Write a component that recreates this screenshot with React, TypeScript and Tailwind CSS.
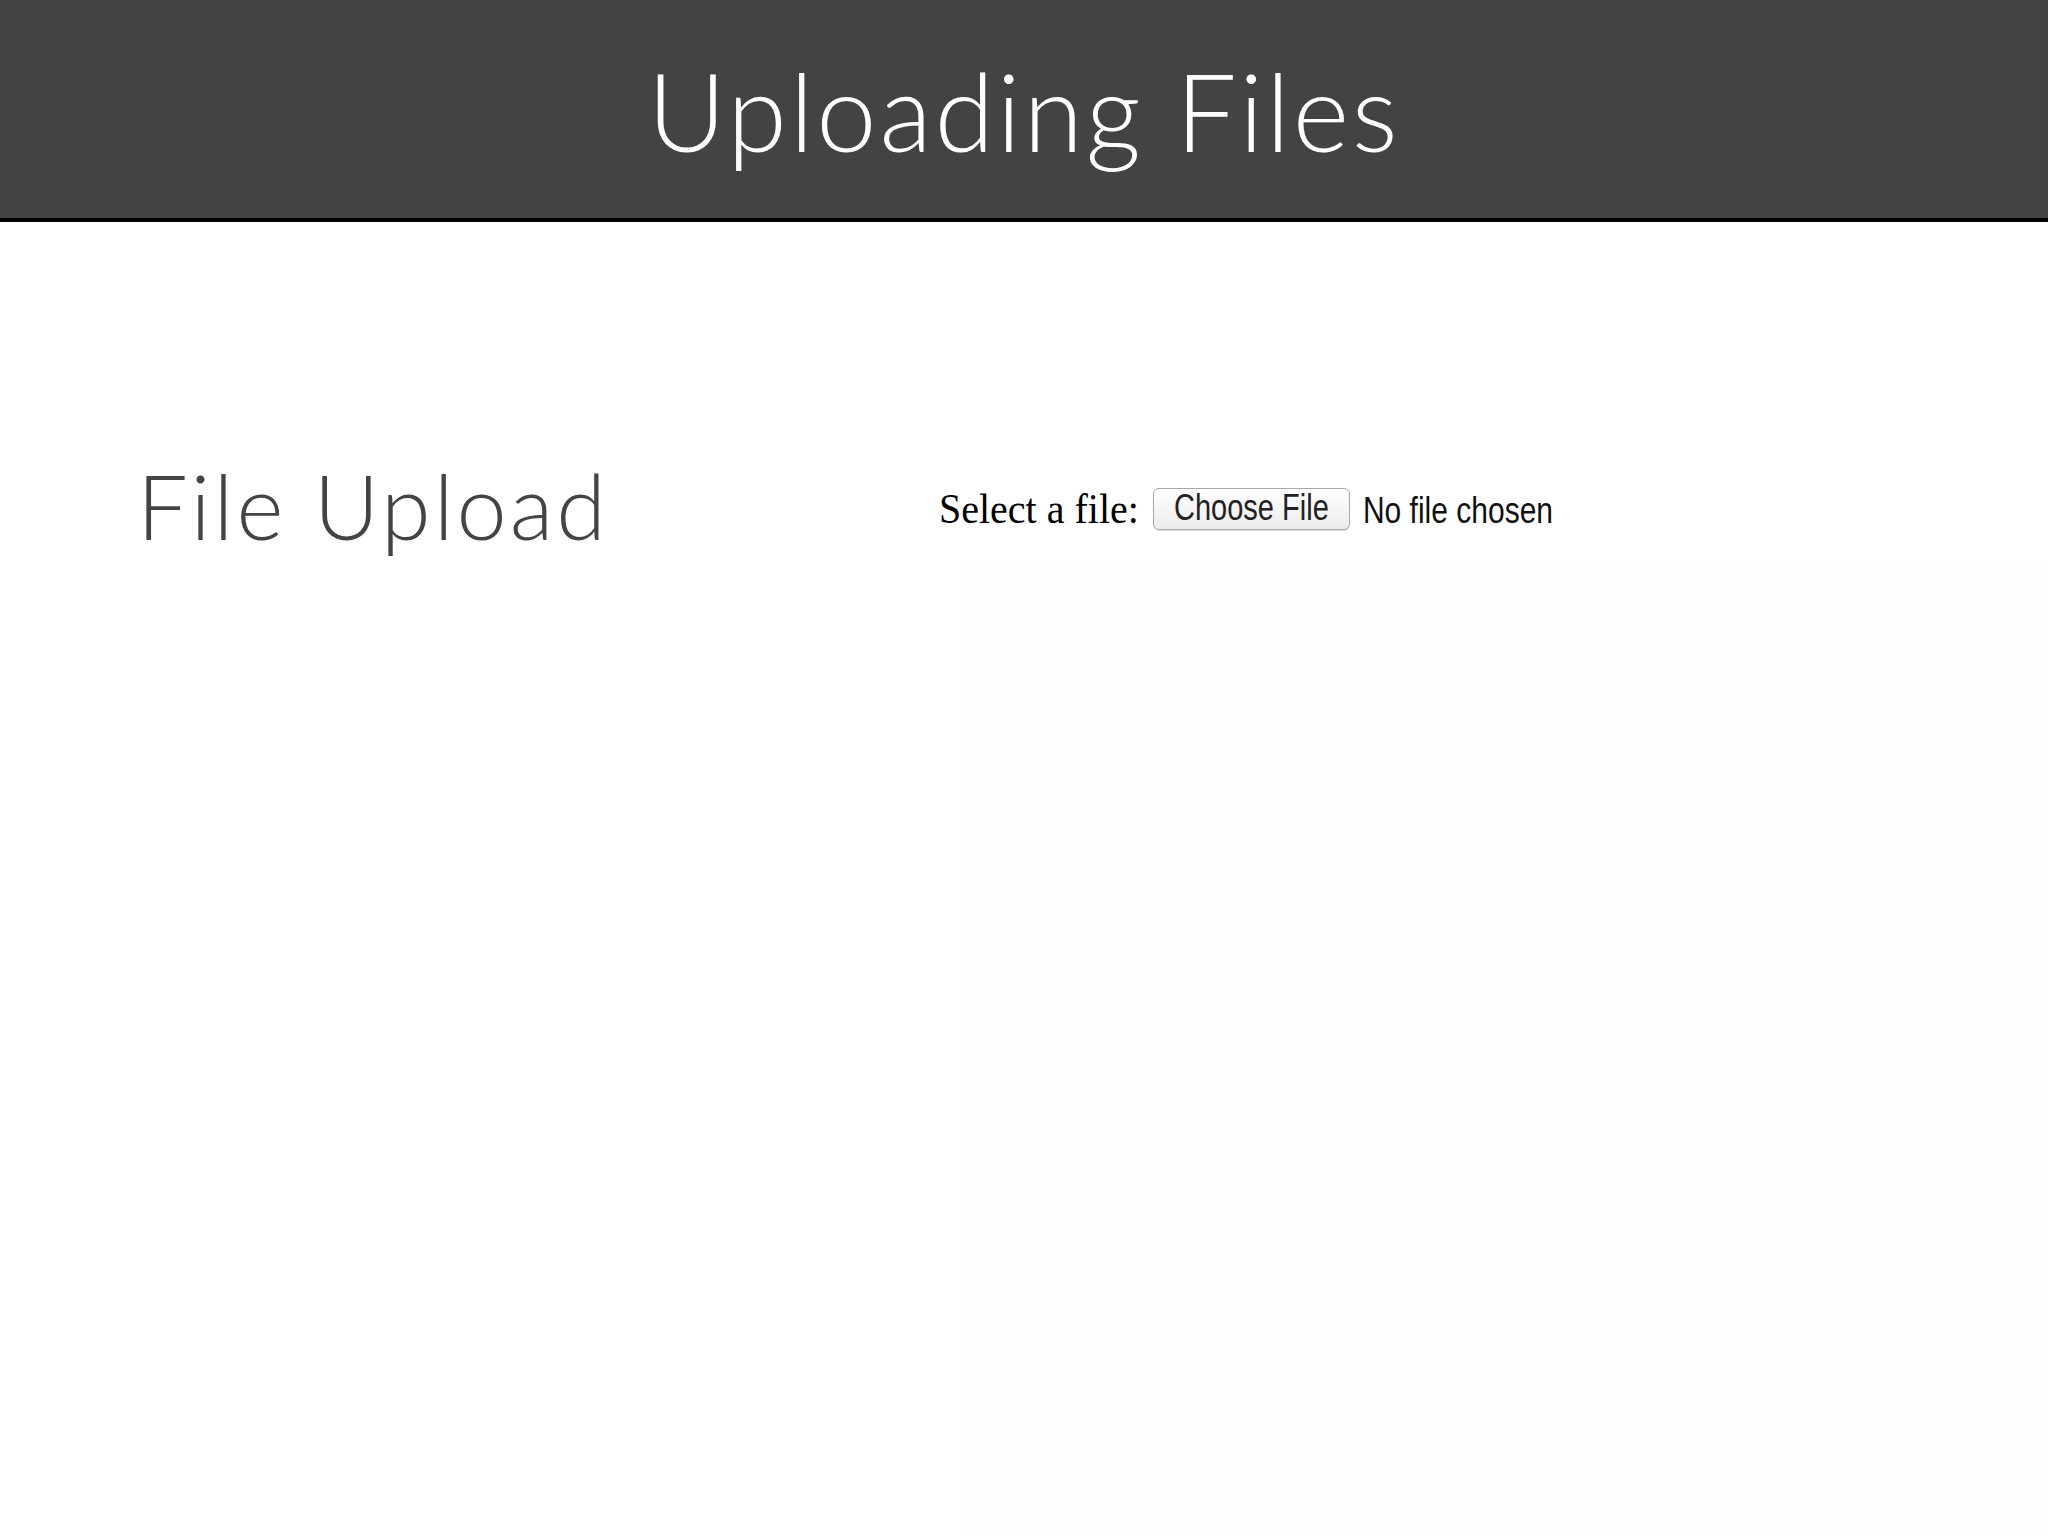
export default function App() {
  return (
    <div className="min-h-screen w-full bg-white flex flex-col">
      <header className="h-[222px] bg-[#434343] border-b-4 border-black flex items-center justify-center">
        <h1
          className="text-white text-[108px] font-light leading-none tracking-[2.8px] pt-[2px]"
          style={{ fontFamily: 'Lato, "Open Sans", sans-serif' }}
        >
          Uploading Files
        </h1>
      </header>

      <main className="flex-1 flex">
        <section className="w-[939px] shrink-0 pl-[137px] pt-[238px]">
          <h2
            className="text-[#444444] text-[90px] font-light leading-none tracking-[3px]"
            style={{ fontFamily: 'Lato, "Open Sans", sans-serif' }}
          >
            File Upload
          </h2>
        </section>

        <section className="flex-1 flex flex-col pt-[265px]">
          <div className="flex items-center h-[44px] bg-white">
            <label
              className="text-black text-[40px] leading-none mr-[14px] inline-block scale-y-105"
              style={{ fontFamily: '"Liberation Serif", "Times New Roman", serif' }}
            >
              Select a file:
            </label>
            <button
              type="button"
              className="h-[42px] w-[197px] rounded-[6px] border border-[#a8a8a8] bg-gradient-to-b from-white to-[#ececec] shadow-[0_1px_1px_rgba(0,0,0,0.15)] flex items-center justify-center text-[#222] text-[29px]"
              style={{ fontFamily: '"Liberation Sans", Arial, sans-serif' }}
            >
              <span className="inline-block scale-y-125">Choose File</span>
            </button>
            <span
              className="ml-[13px] text-[#111] text-[30px] inline-block scale-y-125"
              style={{ fontFamily: '"Liberation Sans", Arial, sans-serif' }}
            >
              No file chosen
            </span>
          </div>
          <div className="flex-1 mt-[30px] ml-[22px] bg-[#fdfdfd]" />
        </section>
      </main>
    </div>
  );
}
